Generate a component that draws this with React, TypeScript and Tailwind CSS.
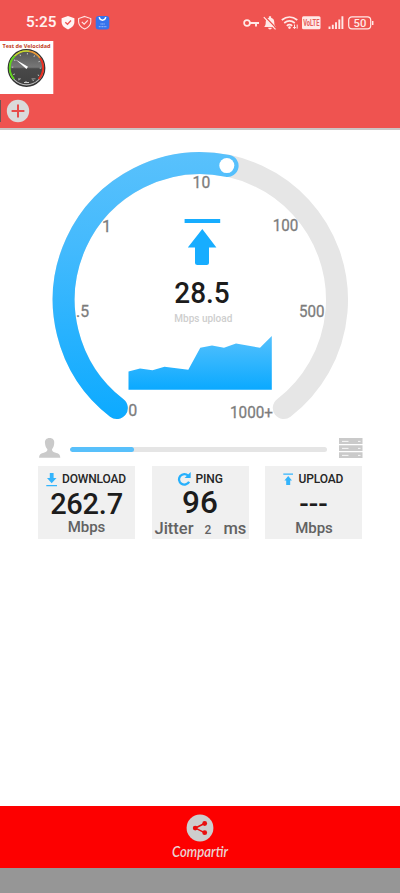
import React from "react";

function StatusBar() {
  return (
    <div className="flex h-[41px] items-center pt-[4px]">
      <span className="ml-[26px] w-[31px] text-[15.3px] leading-none font-semibold whitespace-nowrap text-[#fff0ef]">5:25</span>
      <svg className="ml-[4px]" width="50" height="16" viewBox="0 0 50 16">
        <path d="M7 1 L13.4 3.3 V6.8 C13.4 10.7 10.7 12.8 7 14.6 C3.3 12.8 .6 10.7 .6 6.8 V3.3Z" fill="#fff5f4" />
        <path d="M4.3 7.2 L6.5 9.3 L10 5.5" fill="none" stroke="#ef5350" strokeWidth="1.3" />
        <path d="M23.7 1.4 L29.8 3.6 V6.8 C29.8 10.4 27.2 12.5 23.7 14.1 C20.2 12.5 17.6 10.4 17.6 6.8 V3.6Z" fill="none" stroke="#ffe5e3" strokeWidth="1.1" />
        <path d="M20.8 6.8 L23.2 9.2 L26.8 5.3" fill="none" stroke="#ffe5e3" strokeWidth="1.2" />
        <rect x="34.7" y="1" width="13.6" height="13.6" rx="3" fill="#3573ed" />
        <path d="M38.2 2.2 C39 6.2 44 6.2 44.8 2.2" fill="none" stroke="#fff" strokeWidth="1.4" />
        <path d="M39.5 9 H43.7 M37.8 11.7 H45.4" stroke="#a9c7ff" strokeWidth=".9" strokeDasharray="1.2 .4" />
      </svg>
      <svg className="ml-[132px]" width="134" height="16" viewBox="0 0 134 16" fill="none" stroke="#ffe9e7">
        <circle cx="4" cy="8" r="2.9" strokeWidth="1.7" />
        <path d="M7 8 H16 M13 8 V11.5" strokeWidth="1.9" />
        <path d="M21.2 12 C22.7 10.3 22.7 9 22.7 7.3 C22.7 4.4 24.1 3.3 25.9 2.8 V1.3 H28.1 V2.8 C30.2 3.4 31.3 5 31.3 7.3 C31.3 9.2 31.4 10.3 32.9 12 Z M25.1 12.8 H28.9 C28.6 15 25.4 15 25.1 12.8Z" fill="#ffe9e7" stroke="none" />
        <path d="M21.8 1.6 L33.4 13.6" stroke="#ef5350" strokeWidth="1.5" />
        <path d="M20.8 2.2 L32.5 14.4" strokeWidth="1.2" />
        <path d="M38.8 5 Q46.5 -1 54.3 5 M41.2 8 Q46.5 3.8 51.8 8 M43.8 10.8 Q46.5 8.6 49.2 10.8" strokeWidth="1.7" />
        <circle cx="46.5" cy="12.6" r="1.3" fill="#ffe9e7" stroke="none" />
        <path d="M51.5 9.5 V13.5 M50 12 L51.5 13.7 L53 12 M54.2 13.6 V9.6" strokeWidth="1" />
        <rect x="59" y="1.3" width="18.5" height="13" rx="1.5" fill="#ffe9e7" stroke="none" />
        <text x="60.2" y="11.2" textLength="16.2" lengthAdjust="spacingAndGlyphs" className="font-['Roboto'] text-[9px] font-bold" fill="#e65b58" stroke="none">VoLTE</text>
        <path d="M86.5 11.5 V14 M89.8 9.7 V14 M93 7.2 V14 M96.3 4.5 V14 M99.4 1.3 V14" strokeWidth="1.9" />
        <rect x="105.7" y="1.8" width="22" height="12" rx="3.3" strokeWidth="1.2" />
        <path d="M129.7 6 V10" strokeWidth="1.5" />
        <text x="110.5" y="11.9" textLength="12.8" lengthAdjust="spacingAndGlyphs" className="font-['Roboto'] text-[11.5px] font-medium" fill="#ffe9e7" stroke="none">50</text>
      </svg>
    </div>
  );
}

function AppLogo() {
  return (
    <svg className="block" width="54" height="53" viewBox="0 0 54 53">
      <defs>
        <linearGradient id="dial" x1="0" y1="0" x2="0" y2="1">
          <stop offset="0" stopColor="#555" />
          <stop offset=".48" stopColor="#777" />
          <stop offset=".53" stopColor="#484848" />
          <stop offset="1" stopColor="#414141" />
        </linearGradient>
      </defs>
      <rect width="53.3" height="53" fill="#fff" />
      <circle cx="26.5" cy="27" r="18.2" fill="#bbb" stroke="#333" strokeWidth="1.4" />
      <circle cx="26.5" cy="26.8" r="16.5" fill="url(#dial)" />
      <path d="M14 38 A16.7 16.7 0 0 1 14.7 15" fill="none" stroke="#60d51b" strokeWidth="1.9" />
      <path d="M14.7 15 A16.7 16.7 0 0 1 29 10.2" fill="none" stroke="#c8d927" strokeWidth="1.6" />
      <path d="M29 10.2 A16.7 16.7 0 0 1 40 17" fill="none" stroke="#ed9932" strokeWidth="1.6" />
      <path d="M40 17 A16.7 16.7 0 0 1 38.8 38" fill="none" stroke="#ee2e20" strokeWidth="2" />
      <circle cx="26.5" cy="26.8" r="14" fill="none" stroke="#ddd" strokeWidth="1.5" strokeDasharray=".8 6.53" />
      <path d="M15.5 18.5 L28 25.7 L26.5 28 Z" fill="#fff" />
      <path d="M18 37.8 H21 M31.5 37.8 H35.5" stroke="#aaa" strokeWidth=".8" />
      <path d="M24 41.5 H29" stroke="#ccc" strokeWidth="1" />
      <text x="2.5" y="7.2" textLength="48" lengthAdjust="spacingAndGlyphs" className="font-['Open_Sans'] text-[5.8px] font-bold" fill="#bf3c23">Test de Velocidad</text>
    </svg>
  );
}

function Header() {
  return (
    <header className="h-[130px] border-b-[2px] border-[#cbc5c5] bg-[#ef5350]">
      <StatusBar />
      <AppLogo />
      <div className="flex h-[33px] items-center pt-[1px]">
        <div className="h-[22px] w-[1px] bg-[#6c5554]" />
        <svg className="ml-[5px]" width="24" height="24" viewBox="0 0 24 24">
          <circle cx="12" cy="12" r="11.2" fill="#dadada" />
          <path d="M5.6 12 H18.4 M12 5.6 V18.4" stroke="#e74b4a" strokeWidth="2" />
        </svg>
      </div>
    </header>
  );
}

function Gauge() {
  return (
    <svg className="block font-['Roboto']" width="400" height="300" viewBox="0 130 400 300">
      <defs>
        <linearGradient id="arc" gradientUnits="userSpaceOnUse" x1="0" y1="152" x2="0" y2="420">
          <stop offset="0" stopColor="#59c1fc" />
          <stop offset=".35" stopColor="#44bafd" />
          <stop offset="1" stopColor="#0caaff" />
        </linearGradient>
        <linearGradient id="area" gradientUnits="userSpaceOnUse" x1="0" y1="336" x2="0" y2="390">
          <stop offset="0" stopColor="#55c1fd" />
          <stop offset="1" stopColor="#0aa9ff" />
        </linearGradient>
      </defs>
      <path d="M116.8 408 A136.7 136.7 0 1 1 283.8 408" fill="none" stroke="#e6e6e6" strokeWidth="22" strokeLinecap="round" />
      <path d="M116.8 408 A136.7 136.7 0 0 1 227.6 165.9" fill="none" stroke="url(#arc)" strokeWidth="22" strokeLinecap="round" />
      <circle cx="226.8" cy="165.6" r="7.5" fill="#fff" />
      <g fill="#7c7c7c" stroke="#7c7c7c" strokeWidth=".3" className="text-[16.5px]">
        <text x="192.6" y="188.3" textLength="17.6" lengthAdjust="spacingAndGlyphs">10</text>
        <text x="102" y="232.3">1</text>
        <text x="272.8" y="231.3" textLength="25.6" lengthAdjust="spacingAndGlyphs">100</text>
        <text x="76" y="316.7" textLength="13" lengthAdjust="spacingAndGlyphs">.5</text>
        <text x="299" y="316.7" textLength="25.5" lengthAdjust="spacingAndGlyphs">500</text>
        <text x="128.3" y="416.3" textLength="9" lengthAdjust="spacingAndGlyphs">0</text>
        <text x="230" y="418" textLength="43" lengthAdjust="spacingAndGlyphs">1000+</text>
      </g>
      <path d="M184.6 219 H220.2 V223 H184.6Z M202.3 229 L216.4 247.5 H209 V262.5 Q209 265 206.5 265 H197.5 Q195 265 195 262.5 V247.5 H187.8Z" fill="#17adff" />
      <text x="202" y="302.5" textAnchor="middle" textLength="55.5" lengthAdjust="spacingAndGlyphs" className="text-[29.5px] font-medium" fill="#1c1c1c">28.5</text>
      <text x="203.3" y="321.7" textAnchor="middle" textLength="58" className="text-[10px] font-medium" fill="#cecece">Mbps upload</text>
      <path d="M128.5 389.8 V371.5 L140 368.4 L152.5 370.2 L164.5 366.7 L188.3 369.8 L200.3 347.8 L212 345.5 L224 347.8 L236 343.4 L260 347.8 L271.8 336 V389.8Z" fill="url(#area)" />
    </svg>
  );
}

function ProgressRow() {
  return (
    <div className="flex h-[36px] items-center">
      <svg className="ml-[38px]" width="24" height="22" viewBox="0 0 24 22">
        <path d="M11.6 1 C15 1 16.5 3.2 16.2 6.2 C16.1 8.7 15.2 10.8 14 12.2 C14 14.2 14.8 14.8 17 15.4 C20.9 16.4 22.2 17.4 22.3 20.8 H1.1 C1.2 17.4 2.5 16.4 6.4 15.4 C8.6 14.8 9.4 14.2 9.4 12.2 C8 10.8 7.2 8.7 7 6.2 C6.7 3.2 8.2 1 11.6 1Z" fill="#cacaca" />
      </svg>
      <div className="mt-[3px] ml-[7.5px] h-[5px] w-[257.5px] overflow-hidden rounded-full bg-[#e5e5e5]">
        <div className="h-full w-[64.5px] rounded-full bg-[#58c0fb]" />
      </div>
      <svg className="ml-[12px]" width="24" height="22" viewBox="0 0 24 22">
        <path d="M0 1 H23.5 V7 H0Z M0 8.2 H23.5 V14 H0Z M0 15.2 H23.5 V21 H0Z" fill="#cacaca" />
        <path d="M3 4.4 H9.5 M3 11.4 H9.5 M3 18.4 H9.5 M19 4.4 H21.5 M19 11.4 H21.5 M19 18.4 H21.5" stroke="#f7f7f7" strokeWidth="1" />
      </svg>
    </div>
  );
}

function Results() {
  return (
    <section className="flex justify-between pr-[38px] pl-[38px] font-['Roboto'] font-medium text-[#626262]">
      <div className="flex h-[73px] w-[97px] flex-col items-center bg-[#f0f0f0]">
        <div className="flex h-[24px] w-full items-center pt-[2px] pl-[8px]">
          <svg width="12" height="15" viewBox="0 0 12 15" fill="#33b4fc">
            <path d="M3.8 1 H7.6 V6 H10.5 L5.7 11.2 L1 6 H3.8Z M.3 13 H11 V14.3 H.3Z" />
          </svg>
          <span className="ml-[4px] text-[12px] leading-none tracking-[-0.15px] text-[#252525]">DOWNLOAD</span>
        </div>
        <span className="text-[29px] leading-[28px] tracking-[-0.25px] text-[#1c1c1c]">262.7</span>
        <span className="mt-[1px] text-[15px] leading-[16px]">Mbps</span>
      </div>
      <div className="flex h-[73px] w-[97px] flex-col items-center bg-[#f0f0f0]">
        <div className="flex h-[24px] w-full items-center pt-[2px] pl-[25px]">
          <svg width="14" height="14" viewBox="0 0 14 14">
            <path d="M11.2 3.7 A5.3 5.3 0 1 0 12.1 9.7" fill="none" stroke="#27b0fc" strokeWidth="2.3" />
            <path d="M13.7 0 V6.1 H7.6Z" fill="#27b0fc" />
          </svg>
          <span className="ml-[5px] text-[12px] leading-none tracking-[-0.1px] text-[#252525]">PING</span>
        </div>
        <span className="text-[31.5px] leading-[27px] text-[#1c1c1c]">96</span>
        <div className="mt-[4px] flex w-full items-baseline pl-[3px] leading-[18px] whitespace-nowrap">
          <span className="text-[16.5px]">Jitter</span>
          <span className="ml-[11px] text-[12px]">2</span>
          <span className="ml-[12px] text-[16.5px]">ms</span>
        </div>
      </div>
      <div className="flex h-[73px] w-[97px] flex-col items-center bg-[#f0f0f0]">
        <div className="flex h-[24px] w-full items-center pt-[2px] pl-[18px]">
          <svg width="11" height="13" viewBox="0 0 11 13" fill="#33b4fc">
            <path d="M.3 .5 H10 V1.8 H.3Z M5.2 3 L9 7.5 H7.2 V12 H3.2 V7.5 H1.4Z" />
          </svg>
          <span className="ml-[4.5px] text-[12px] leading-none tracking-[-0.15px] text-[#252525]">UPLOAD</span>
        </div>
        <span className="text-[28px] leading-[28px] text-[#1c1c1c]">---</span>
        <span className="mt-[2px] ml-[1px] text-[15px] leading-[17px]">Mbps</span>
      </div>
    </section>
  );
}

function Footer() {
  return (
    <footer className="mt-auto">
      <div className="flex h-[62px] flex-col items-center bg-[#fd0000] pt-[8px]">
        <svg width="28" height="28" viewBox="0 0 28 28">
          <circle cx="14" cy="14" r="13.4" fill="#cdcdcd" />
          <path d="M18.5 9.5 L9.3 14.1 L18.5 18.7" fill="none" stroke="#e90e0e" strokeWidth="1.5" />
          <g fill="#e90e0e"><circle cx="18.7" cy="9.5" r="2.4" /><circle cx="9.2" cy="14.1" r="2.4" /><circle cx="18.7" cy="18.7" r="2.4" /></g>
        </svg>
        <svg className="overflow-visible" width="60" height="26" viewBox="0 0 60 26">
          <text x="2" y="14.8" textLength="56" lengthAdjust="spacingAndGlyphs" className="font-['Lato'] text-[15px] font-semibold italic" fill="#ebd2d2">Compartir</text>
        </svg>
      </div>
      <div className="h-[25px] bg-[#969696]" />
    </footer>
  );
}

export default function App() {
  return (
    <div className="flex h-[893px] w-[400px] flex-col overflow-hidden bg-white font-['Roboto',sans-serif]">
      <Header />
      <Gauge />
      <ProgressRow />
      <Results />
      <Footer />
    </div>
  );
}
